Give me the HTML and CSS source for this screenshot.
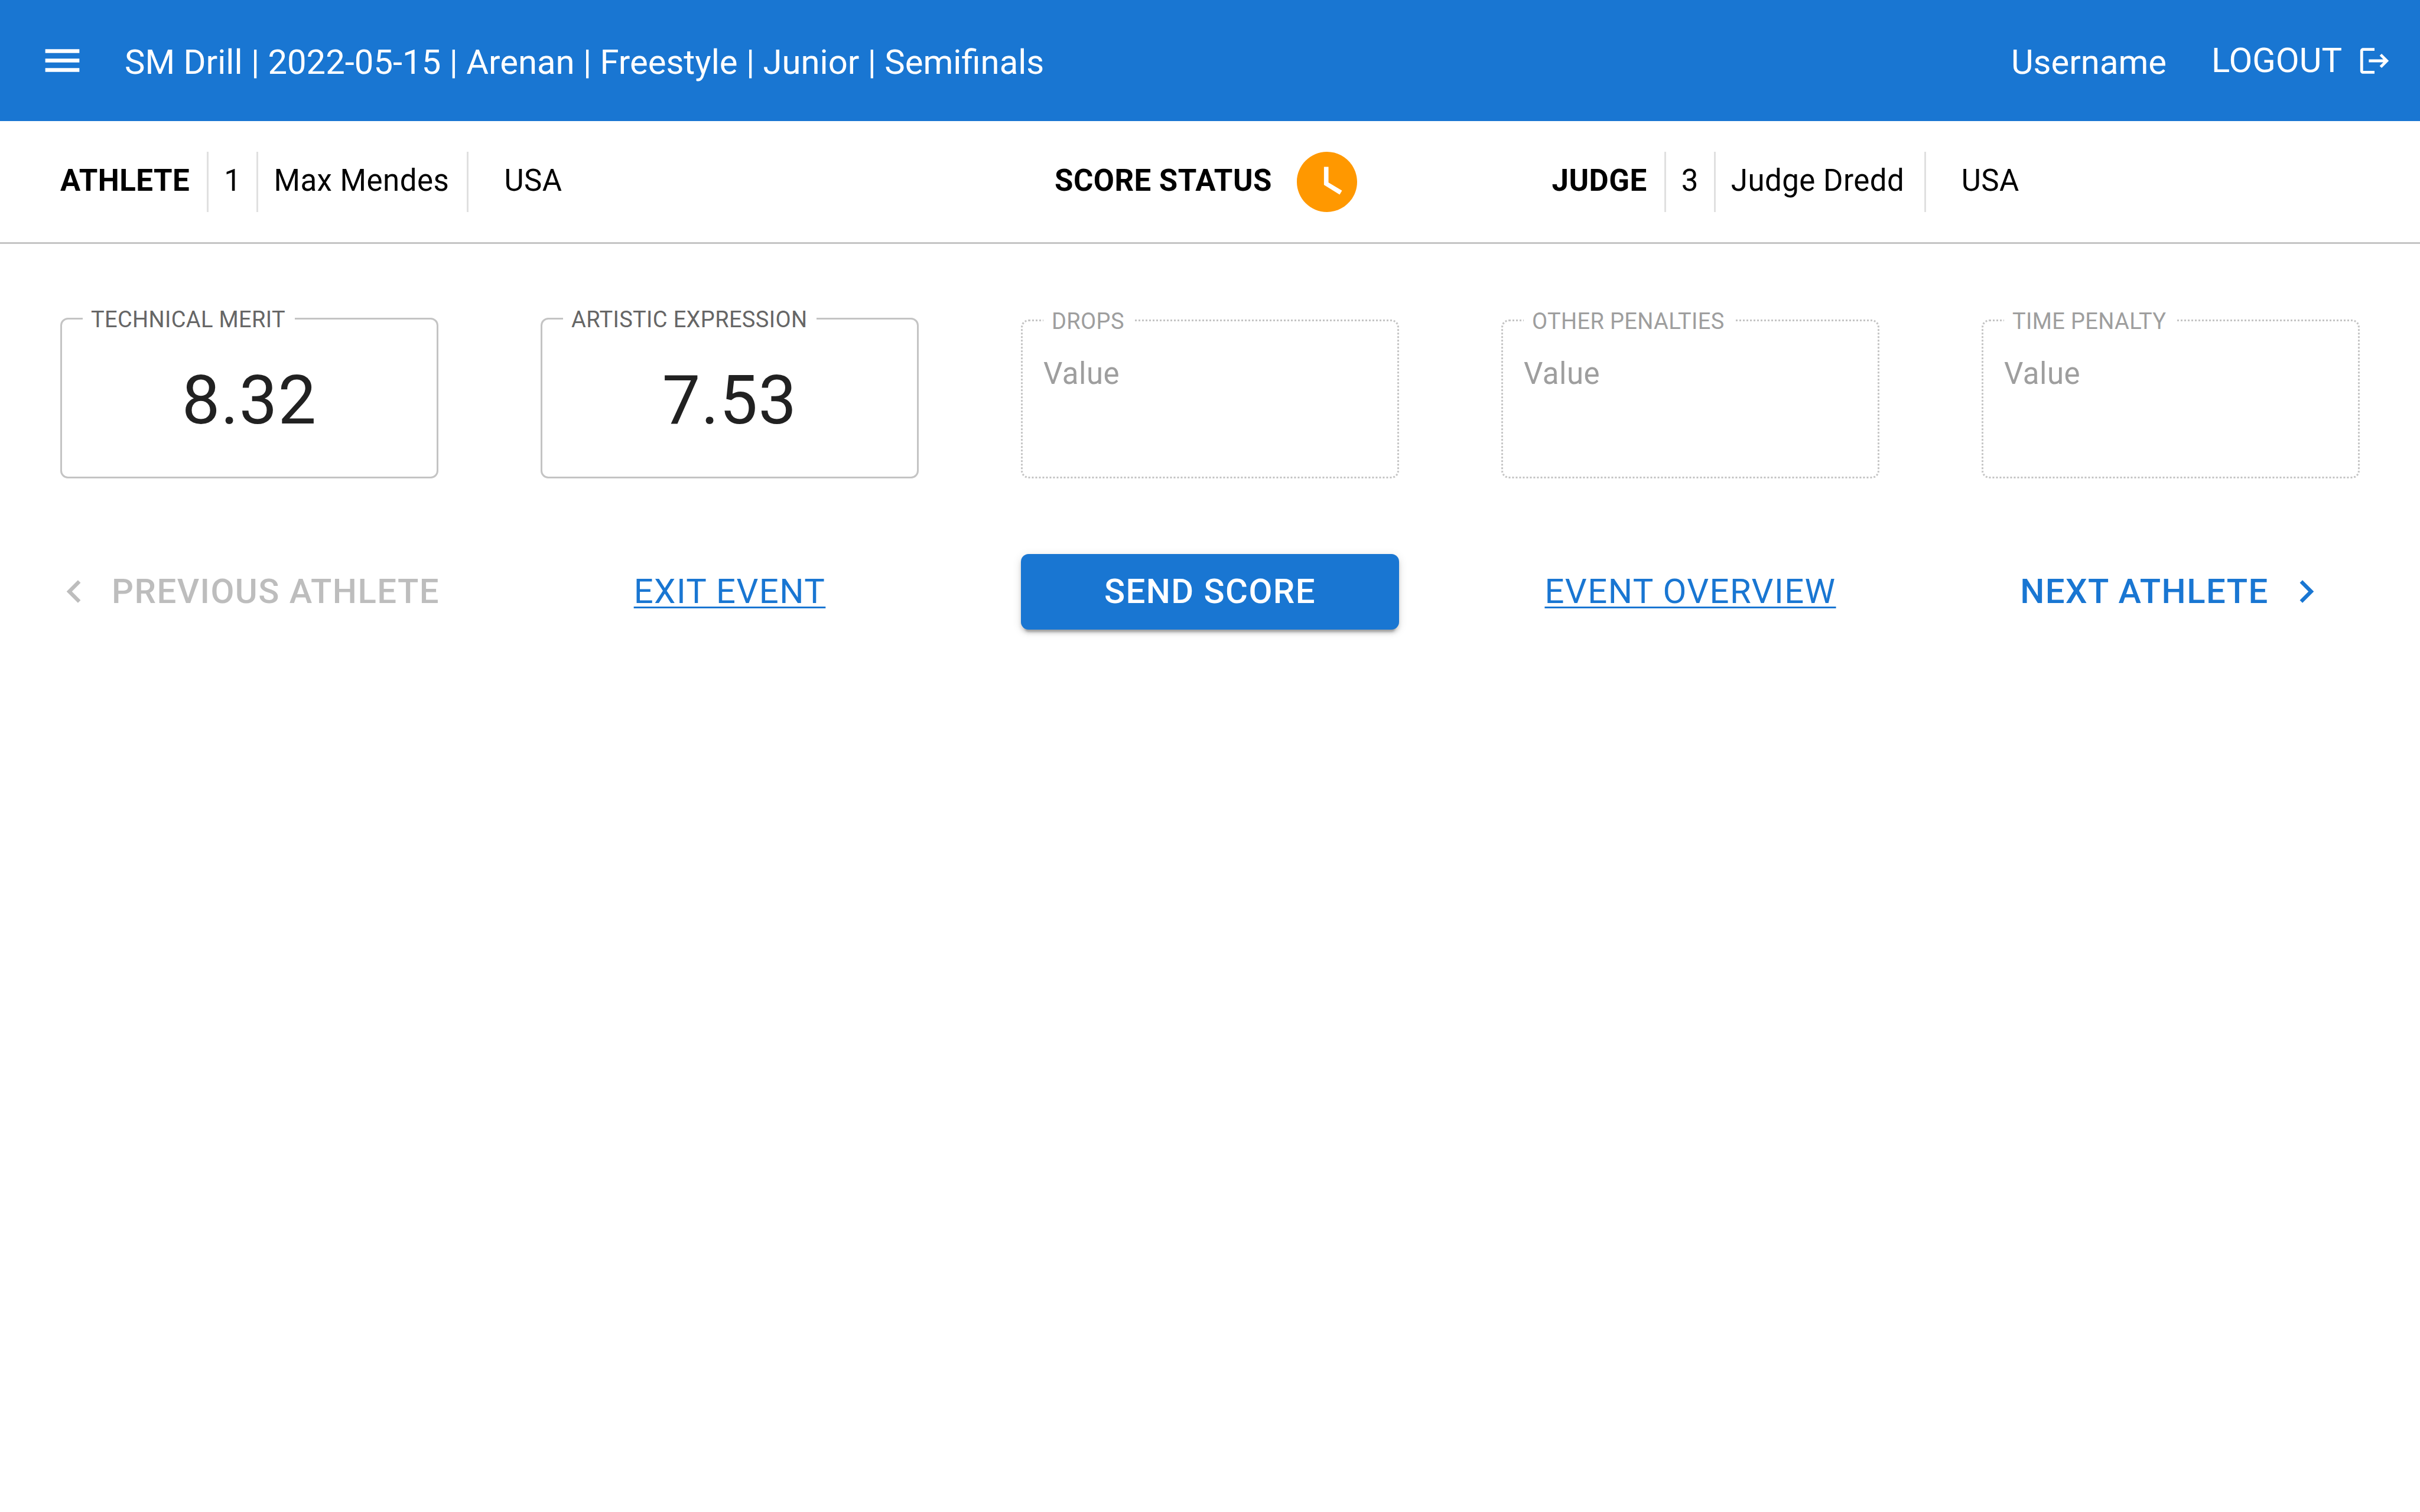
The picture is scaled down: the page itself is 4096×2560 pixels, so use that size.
FILE: index.html
```html
<!DOCTYPE html>
<html lang="en">
<head>
  <meta charset="utf-8">
  <title>SM Drill – Judge scoring</title>
  <link rel="stylesheet" href="styles.css">
</head>
<body>
  <header class="app-bar">
    <button class="icon-button" type="button" aria-label="Menu">
      <svg class="icon" viewBox="0 0 24 24" aria-hidden="true"><path d="M3 18h18v-2H3v2zm0-5h18v-2H3v2zm0-7v2h18V6H3z"/></svg>
    </button>
    <h1 class="app-bar-text app-bar-title">SM Drill | 2022-05-15 | Arenan | Freestyle | Junior | Semifinals</h1>
    <span class="app-bar-text">Username</span>
    <button class="logout" type="button">
      LOGOUT
      <svg class="icon icon-small" viewBox="0 0 24 24" aria-hidden="true"><path d="m17 7-1.41 1.41L18.17 11H8v2h10.17l-2.58 2.58L17 17l5-5zM4 5h8V3H4c-1.1 0-2 .9-2 2v14c0 1.1.9 2 2 2h8v-2H4z"/></svg>
    </button>
  </header>

  <section class="info-bar">
    <div class="info-group">
      <strong class="info-label">ATHLETE</strong>
      <span class="info-cell">1</span>
      <span class="info-cell info-name">Max Mendes</span>
      <span class="info-cell info-country">USA</span>
    </div>
    <div class="info-group">
      <strong class="info-label">SCORE STATUS</strong>
      <svg class="status-icon" viewBox="2 2 20 20" role="img" aria-label="Pending"><path d="M12 2C6.5 2 2 6.5 2 12s4.500 10 10 10 10-4.500 10-10S17.500 2 12 2zm4.200 14.200L11 13V7h1.500v5.200l4.500 2.700-.8 1.300z"/></svg>
    </div>
    <div class="info-group">
      <strong class="info-label">JUDGE</strong>
      <span class="info-cell">3</span>
      <span class="info-cell info-name">Judge Dredd</span>
      <span class="info-cell info-country">USA</span>
    </div>
  </section>

  <main class="board">
    <fieldset class="field">
      <legend class="field-legend"><label for="technical">TECHNICAL MERIT</label></legend>
      <input class="field-input field-score" id="technical" type="text" inputmode="decimal" value="8.32">
    </fieldset>
    <fieldset class="field">
      <legend class="field-legend"><label for="artistic">ARTISTIC EXPRESSION</label></legend>
      <input class="field-input field-score" id="artistic" type="text" inputmode="decimal" value="7.53">
    </fieldset>
    <fieldset class="field field-off">
      <legend class="field-legend"><label for="drops">DROPS</label></legend>
      <input class="field-input" id="drops" type="text" placeholder="Value" disabled>
    </fieldset>
    <fieldset class="field field-off">
      <legend class="field-legend"><label for="other">OTHER PENALTIES</label></legend>
      <input class="field-input" id="other" type="text" placeholder="Value" disabled>
    </fieldset>
    <fieldset class="field field-off">
      <legend class="field-legend"><label for="time">TIME PENALTY</label></legend>
      <input class="field-input" id="time" type="text" placeholder="Value" disabled>
    </fieldset>

    <button class="action" type="button" disabled>
      <svg class="icon icon-start" viewBox="0 0 24 24" aria-hidden="true"><path d="M15.410 7.410 14 6l-6 6 6 6 1.410-1.410L10.830 12z"/></svg>
      PREVIOUS ATHLETE
    </button>
    <a class="action action-link" href="#exit">EXIT EVENT</a>
    <button class="action action-primary" type="button">SEND SCORE</button>
    <a class="action action-link" href="#overview">EVENT OVERVIEW</a>
    <button class="action" type="button">
      NEXT ATHLETE
      <svg class="icon icon-end" viewBox="0 0 24 24" aria-hidden="true"><path d="M10 6 8.590 7.410 13.170 12l-4.580 4.590L10 18l6-6z"/></svg>
    </button>
  </main>
</body>
</html>
```

FILE: styles.css
```css
* {
  box-sizing: border-box;
}

body {
  margin: 0;
  background: #fff;
  color: #000;
  font-family: Roboto, sans-serif;
  font-size: 51px;
  line-height: 77px;
}

button,
input {
  margin: 0;
  padding: 0;
  border: 0;
  background: none;
  color: inherit;
  font: inherit;
}

.icon {
  flex: none;
  display: block;
  width: 77px;
  height: 77px;
  fill: currentColor;
}

.icon-small {
  width: 58px;
  height: 58px;
}

/* App bar */

.app-bar {
  display: flex;
  align-items: center;
  min-height: 205px;
  padding: 0 48px 0 67px;
  background: #1976d2;
  color: #fff;
  font-size: 58px;
}

.app-bar-text {
  margin: 0;
  padding-top: 6px;
  font-size: inherit;
  font-weight: 400;
}

.app-bar-title {
  flex: 1;
  padding-left: 67px;
}

.logout {
  display: flex;
  align-items: center;
  gap: 26px;
  margin-left: 76px;
}

/* Athlete, status and judge */

.info-bar {
  display: grid;
  grid-template-columns: 2fr 1fr 1.625fr;
  align-items: center;
  min-height: 208px;
  padding: 0 102px;
  border-bottom: 3px solid #c4c4c4;
  letter-spacing: 0.00938em;
}

.info-group {
  display: flex;
  align-items: center;
  white-space: nowrap;
}

.info-label {
  padding: 0 29px 4px 0;
  font-weight: 700;
}

.info-cell {
  padding: 10px 26px 15px;
  border-left: 3px solid #e0e0e0;
}

.info-name {
  min-width: 356px;
}

.info-country {
  padding-left: 60px;
}

.status-icon {
  flex: none;
  width: 102px;
  height: 102px;
  margin-left: 13px;
  fill: #ff9800;
}

/* Score fields and actions */

.board {
  display: grid;
  grid-template-columns: repeat(5, minmax(0, 1fr));
  align-items: end;
  gap: 128px 173px;
  padding: 102px;
}

.field {
  min-width: 0;
  margin: 0;
  padding: 0 35px;
  border: 3px solid #c4c4c4;
  border-radius: 13px;
  color: #212121;
}

.field-legend {
  padding: 3px 16px 0 14px;
  color: #666;
  font-size: 38px;
  line-height: 46px;
  letter-spacing: 0.00938em;
}

.field-input {
  display: block;
  width: 100%;
  height: 240px;
  padding: 28px 0 138px;
  letter-spacing: 0.00938em;
}

.field-score {
  height: 243px;
  padding: 30px 0 47px;
  font-size: 115px;
  text-align: center;
}

.field-off {
  border-style: dotted;
}

.field-off .field-legend {
  color: #9e9e9e;
}

.field-input::placeholder {
  color: #9e9e9e;
  opacity: 1;
}

.action {
  display: flex;
  align-items: center;
  justify-content: center;
  gap: 25px;
  min-height: 128px;
  padding-bottom: 2px;
  border-radius: 13px;
  color: #1976d2;
  font-size: 58px;
  font-weight: 500;
  letter-spacing: 0.025em;
  white-space: nowrap;
}

.action:disabled {
  color: #bdbdbd;
}

.action-link {
  font-weight: 400;
  text-decoration: underline;
  text-decoration-thickness: 3px;
  text-underline-offset: 6px;
}

.action-primary {
  background: #1976d2;
  color: #fff;
  box-shadow: 0 10px 3px -6px rgba(0, 0, 0, 0.2), 0 6px 6px rgba(0, 0, 0, 0.14), 0 3px 16px rgba(0, 0, 0, 0.12);
}

.icon-start {
  margin-left: -13px;
}

.icon-end {
  margin-right: -13px;
}
```
